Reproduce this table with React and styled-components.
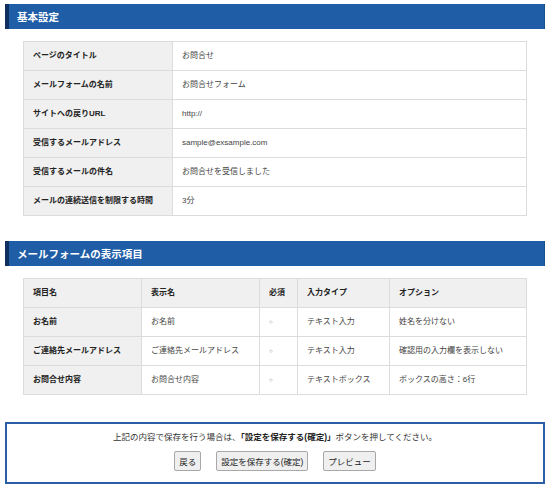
import styled, { createGlobalStyle } from 'styled-components';

const GlobalStyle = createGlobalStyle`
  body {
    margin: 0;
    background: #fff;
    font-family: 'Noto Sans CJK JP', 'Liberation Sans', sans-serif;
    color: #333;
  }
`;

const Page = styled.div`
  width: 550px;
  padding: 4px 5px 0;
  box-sizing: border-box;
`;

const Section = styled.section`
  margin-bottom: ${({ $gap }) => $gap}px;
`;

const Heading = styled.h2`
  margin: 0;
  height: 25px;
  display: flex;
  align-items: center;
  padding-left: 8px;
  background: #1f5ea6;
  border-left: 4px solid #0f2f5e;
  border-right: 1px solid #17508f;
  color: #fff;
  font-size: 10.5px;
  font-weight: bold;
`;

const TableWrap = styled.div`
  padding: ${({ $top }) => $top}px 18px 0;
`;

const Table = styled.table`
  width: 100%;
  border-collapse: collapse;
  font-size: 8px;
  font-family: 'Liberation Sans', 'Noto Sans CJK JP', sans-serif;

  th,
  td {
    height: 28px;
    padding: 0 0 0 9px;
    border: 1px solid #dcdcdc;
    text-align: left;
    vertical-align: middle;
    line-height: 12px;
  }

  th {
    background: #f0f0f0;
    color: #222;
    font-weight: bold;
  }

  td {
    background: #fff;
    color: #444;
    font-weight: normal;
  }
`;

const Footer = styled.div`
  margin-top: 27px;
  border: 2px solid #2b5ea6;
  height: 62px;
  box-sizing: border-box;
  display: flex;
  flex-direction: column;
  align-items: center;
  padding-top: 5px;
  font-size: 8.5px;
  font-family: 'Liberation Sans', 'Noto Sans CJK JP', sans-serif;
  color: #333;
`;

const Notice = styled.p`
  margin: 0;
  line-height: 16px;

  strong {
    color: #222;
  }
`;

const Buttons = styled.div`
  display: flex;
  gap: 15px;
  margin-top: 6px;
`;

const Button = styled.button`
  height: 20px;
  padding: 0 4px;
  font-size: 8.5px;
  font-family: 'Liberation Sans', 'Noto Sans CJK JP', sans-serif;
  color: #222;
  background: #efefef;
  border: 1px solid #a8a8a8;
  border-radius: 2px;
`;

const Required = styled.span`
  font-size: 6px;
  color: #666;
`;

const settings = [
  ['ページのタイトル', 'お問合せ'],
  ['メールフォームの名前', 'お問合せフォーム'],
  ['サイトへの戻りURL', 'http://'],
  ['受信するメールアドレス', 'sample@exsample.com'],
  ['受信するメールの件名', 'お問合せを受信しました'],
  ['メールの連続送信を制限する時間', '3分'],
];

const fields = [
  ['お名前', 'お名前', '○', 'テキスト入力', '姓名を分けない'],
  ['ご連絡先メールアドレス', 'ご連絡先メールアドレス', '○', 'テキスト入力', '確認用の入力欄を表示しない'],
  ['お問合せ内容', 'お問合せ内容', '○', 'テキストボックス', 'ボックスの高さ：6行'],
];

const App = () => {
  return (
    <Page>
      <GlobalStyle />
      <Section $gap={25}>
        <Heading>基本設定</Heading>
        <TableWrap $top={12}>
          <Table>
            <colgroup>
              <col style={{ width: 149 }} />
              <col />
            </colgroup>
            <tbody>
              {settings.map(([label, value]) => (
                <tr key={label}>
                  <th scope="row">{label}</th>
                  <td>{value}</td>
                </tr>
              ))}
            </tbody>
          </Table>
        </TableWrap>
      </Section>
      <Section $gap={0}>
        <Heading>メールフォームの表示項目</Heading>
        <TableWrap $top={12}>
          <Table>
            <colgroup>
              <col style={{ width: 118 }} />
              <col style={{ width: 118 }} />
              <col style={{ width: 38 }} />
              <col style={{ width: 92 }} />
              <col />
            </colgroup>
            <thead>
              <tr>
                <th scope="col">項目名</th>
                <th scope="col">表示名</th>
                <th scope="col">必須</th>
                <th scope="col">入力タイプ</th>
                <th scope="col">オプション</th>
              </tr>
            </thead>
            <tbody>
              {fields.map(([name, label, req, type, option]) => (
                <tr key={name}>
                  <th scope="row">{name}</th>
                  <td>{label}</td>
                  <td><Required>{req}</Required></td>
                  <td>{type}</td>
                  <td>{option}</td>
                </tr>
              ))}
            </tbody>
          </Table>
        </TableWrap>
      </Section>
      <Footer>
        <Notice>
          上記の内容で保存を行う場合は、<strong>「設定を保存する(確定)」</strong>ボタンを押してください。
        </Notice>
        <Buttons>
          <Button>戻る</Button>
          <Button>設定を保存する(確定)</Button>
          <Button>プレビュー</Button>
        </Buttons>
      </Footer>
    </Page>
  );
};

export default App;
